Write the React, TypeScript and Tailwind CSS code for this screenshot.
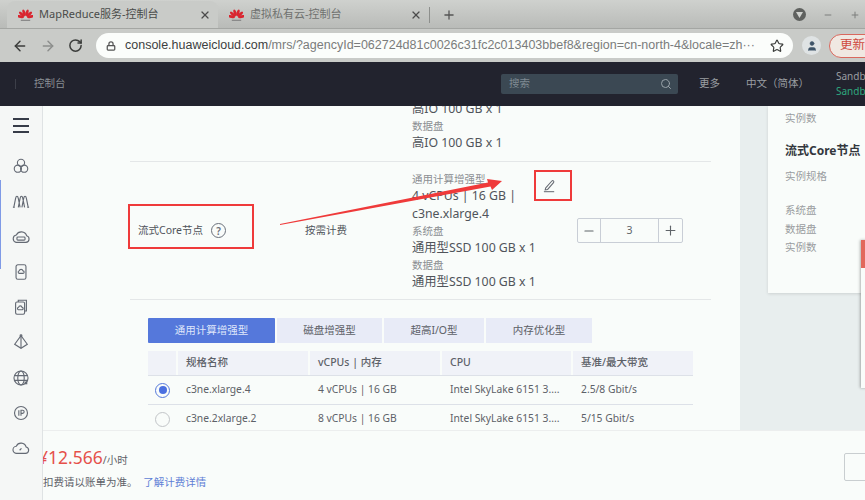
import React from "react";
import { Lock, Star, RotateCw, ArrowLeft, ArrowRight, X, Plus, Minus, Search, User } from "lucide-react";

const FONT = { fontFamily: '"Noto Sans", "Noto Sans CJK SC", sans-serif' };

function HuaweiLogo() {
  const petals = [-78, -48, -17, 17, 48, 78];
  return (
    <svg width="15" height="16" viewBox="0 0 16 16" className="shrink-0">
      {petals.map((a) => (
        <ellipse key={a} cx="8" cy="5.4" rx="1.5" ry="3.7" fill="#d9252f" transform={`rotate(${a} 8 10.8)`} />
      ))}
      <rect x="3" y="13" width="10" height="1.4" fill="#8a8a8a" />
    </svg>
  );
}

function Tab({ title, active }: { title: string; active?: boolean }) {
  return (
    <div
      className={`flex h-full w-[211px] items-center gap-[6px] pl-[11px] pr-[7px] ${
        active ? "rounded-t-[8px] bg-[#c9cbc8] text-[#4a4c4a]" : "text-[#6f716f]"
      }`}
    >
      <HuaweiLogo />
      <span className="flex-1 truncate text-[11px]">{title}</span>
      <X size={12} strokeWidth={2.4} className="text-[#4c4c4c]" />
    </div>
  );
}

const stroke = { fill: "none", stroke: "#646a74", strokeWidth: 1.25 };

function SideIcon({ children }: { children: React.ReactNode }) {
  return (
    <svg width="18" height="18" viewBox="0 0 20 20" className="shrink-0" {...stroke}>
      {children}
    </svg>
  );
}

function Sidebar() {
  return (
    <div className="relative flex w-[43px] shrink-0 flex-col items-center border-r border-[#dfe3e4] bg-[#f5f7f6] pt-[11px]">
      <div className="absolute left-0 top-[74px] h-[89px] w-[1px] bg-[#7f9ae6]" />
      <div className="flex h-[17px] w-[16px] flex-col justify-between py-[1px]">
        <div className="h-[2px] bg-[#363c48]" />
        <div className="h-[2px] bg-[#363c48]" />
        <div className="h-[2px] bg-[#363c48]" />
      </div>
      <div className="mt-[23px] flex flex-col items-center gap-[17.3px]">
        <SideIcon>
          <circle cx="10" cy="6.5" r="4" />
          <circle cx="6.5" cy="13" r="4" />
          <circle cx="13.5" cy="13" r="4" />
        </SideIcon>
        <SideIcon>
          <path d="M2 17l2-10c.6-3 2.4-3 3 0l2 10M7 17l2-10c.6-3 2.4-3 3 0l2 10M11 17l2-10c.6-3 2.4-3 3 0l2 10" />
          <path d="M1 17h2M17 17h2" />
        </SideIcon>
        <SideIcon>
          <path d="M4.5 16h11a3.8 3.8 0 0 0 .8-7.4A6.2 6.2 0 0 0 4.8 7.8a4.2 4.2 0 0 0-.3 8.2z" />
          <rect x="5.5" y="10" width="9" height="3.5" rx="1" />
        </SideIcon>
        <SideIcon>
          <rect x="4.5" y="2" width="11" height="16" rx="2" />
          <path d="M8 11.5h4a1.4 1.4 0 0 0 .2-2.8 2.2 2.2 0 0 0-4.2-.1A1.5 1.5 0 0 0 8 11.5z" />
        </SideIcon>
        <SideIcon>
          <path d="M7 4.5V2.5h9v12h-2" />
          <rect x="4" y="4.5" width="10" height="13.5" rx="1.5" />
          <path d="M7 13h4a1.3 1.3 0 0 0 .2-2.6 2 2 0 0 0-3.9-.1A1.4 1.4 0 0 0 7 13z" />
        </SideIcon>
        <SideIcon>
          <circle cx="10" cy="3" r="1" />
          <path d="M10 3L3 12.5 10 17l7-4.5z" />
          <path d="M10 3v14" />
        </SideIcon>
        <SideIcon>
          <circle cx="10" cy="10" r="7.8" />
          <ellipse cx="10" cy="10" rx="3.6" ry="7.8" />
          <path d="M2.4 7.4h15.2M2.4 12.6h15.2" />
          <rect x="14" y="14" width="3" height="3" fill="#646a74" stroke="none" />
        </SideIcon>
        <SideIcon>
          <circle cx="10" cy="10" r="7.2" />
          <path d="M7.6 7v6M10 13V7h1.8a1.6 1.6 0 0 1 0 3.4H10" />
        </SideIcon>
        <SideIcon>
          <path d="M5.5 16h9.5a3.6 3.6 0 0 0 .7-7.1A5.9 5.9 0 0 0 4.7 8a4 4 0 0 0 .8 8z" />
          <path d="M8.5 12.5l2-2" />
        </SideIcon>
      </div>
    </div>
  );
}

function SpecLine({ children, label }: { children: React.ReactNode; label?: boolean }) {
  return label ? (
    <div className="h-[16px] whitespace-nowrap text-[10.5px] leading-[16px] text-[#8b8e92]">{children}</div>
  ) : (
    <div className="h-[18px] whitespace-nowrap text-[12.3px] leading-[18px] text-[#50545a]">{children}</div>
  );
}

const rows = [
  { on: true, name: "c3ne.xlarge.4", cpu: "4 vCPUs | 16 GB", band: "2.5/8 Gbit/s" },
  { on: false, name: "c3ne.2xlarge.2", cpu: "8 vCPUs | 16 GB", band: "5/15 Gbit/s" },
];
const COLS = "grid grid-cols-[30px_132px_132px_131px_120px]";

function Main() {
  return (
    <div className="relative min-w-0 flex-1 overflow-hidden pl-[87px]">
      <div className="w-[581px]">
        <div className="-mt-[6px] border-b border-[#e4e7e8] pb-[9px] pl-[282px]">
          <SpecLine>高IO 100 GB x 1</SpecLine>
          <SpecLine label>数据盘</SpecLine>
          <SpecLine>高IO 100 GB x 1</SpecLine>
        </div>
        <div className="flex h-[138px] items-center border-b border-[#e4e7e8]">
          <div className="flex w-[175px] items-center pl-[8px] text-[10.5px] text-[#50545a]">
            流式Core节点
            <span className="ml-[8px] flex h-[15px] w-[15px] items-center justify-center rounded-full border-[1.5px] border-[#6a707a] text-[10px] font-semibold leading-none text-[#6a707a]">
              ?
            </span>
          </div>
          <div className="w-[107px] text-[10.5px] text-[#50545a]">按需计费</div>
          <div className="w-[127px] pt-[1px]">
            <SpecLine label>通用计算增强型</SpecLine>
            <SpecLine>4 vCPUs | 16 GB |</SpecLine>
            <SpecLine>c3ne.xlarge.4</SpecLine>
            <SpecLine label>系统盘</SpecLine>
            <SpecLine>通用型SSD 100 GB x 1</SpecLine>
            <SpecLine label>数据盘</SpecLine>
            <SpecLine>通用型SSD 100 GB x 1</SpecLine>
          </div>
          <div className="ml-[38px] flex h-[25px] w-[106px] items-center rounded-[2px] border border-[#c9ced6] text-[#5f6469]">
            <span className="flex h-full w-[23px] items-center justify-center border-r border-[#c9ced6]">
              <Minus size={14} strokeWidth={1.8} />
            </span>
            <span className="flex-1 text-center text-[10.5px]">3</span>
            <span className="flex h-full w-[24px] items-center justify-center border-l border-[#c9ced6]">
              <Plus size={15} strokeWidth={1.8} />
            </span>
          </div>
        </div>
      </div>

      <div className="ml-[18px] mt-[18px] w-[545px]">
        <div className="flex gap-[2px] text-[10.5px] text-[#5d6168]">
          <div className="flex h-[25px] w-[127px] items-center justify-center rounded-[1px] bg-[#5578db] text-[#dfe6fa]">通用计算增强型</div>
          <div className="flex h-[25px] w-[105px] items-center justify-center bg-[#e8ebf7]">磁盘增强型</div>
          <div className="flex h-[25px] w-[100px] items-center justify-center bg-[#e8ebf7]">超高I/O型</div>
          <div className="flex h-[25px] w-[106px] items-center justify-center bg-[#e8ebf7]">内存优化型</div>
        </div>
        <div className={`${COLS} mt-[8px] h-[25px] items-center gap-0 border-b border-[#dde1e8] bg-[#f0f2f8] text-[10.5px] font-medium text-[#5d6168]`}>
          <div className="h-full border-r-2 border-[#f9fcfa]" />
          <div className="flex h-full items-center border-r-2 border-[#f9fcfa] pl-[8px]">规格名称</div>
          <div className="flex h-full items-center border-r-2 border-[#f9fcfa] pl-[8px]">vCPUs | 内存</div>
          <div className="flex h-full items-center border-r-2 border-[#f9fcfa] pl-[8px]">CPU</div>
          <div className="flex h-full items-center pl-[8px]">基准/最大带宽</div>
        </div>
        {rows.map((r) => (
          <div key={r.name} className={`${COLS} h-[29px] items-center border-b border-[#dde1e8] text-[10.3px] text-[#5d6168]`}>
            <div className="flex justify-center pr-[1px]">
              {r.on ? (
                <span className="flex h-[15px] w-[15px] items-center justify-center rounded-full border border-[#5578db]">
                  <span className="h-[8px] w-[8px] rounded-full bg-[#4a6fe0]" />
                </span>
              ) : (
                <span className="h-[15px] w-[15px] rounded-full border border-[#c2c5c8]" />
              )}
            </div>
            <div className="pl-[8px]">{r.name}</div>
            <div className="pl-[8px]">{r.cpu}</div>
            <div className="pl-[8px]">Intel SkyLake 6151 3....</div>
            <div className="pl-[8px]">{r.band}</div>
          </div>
        ))}
      </div>
    </div>
  );
}

function SummaryPanel() {
  return (
    <div className="relative w-[125px] shrink-0 overflow-hidden bg-[#e8eeee] pl-[28px]">
      <div className="h-[187px] w-[110px] bg-[#f9fcfa] pl-[17px] shadow-[0_1px_3px_rgba(0,0,0,0.12)]">
        <div className="text-[10.5px] leading-[25px] text-[#9a9da0]">实例数</div>
        <div className="mt-[8px] whitespace-nowrap text-[12px] font-bold leading-[24px] text-[#33373d]">流式Core节点</div>
        <div className="mt-[1px] text-[10.5px] leading-[24px] text-[#9a9da0]">实例规格</div>
        <div className="mt-[13px] text-[10.5px] leading-[18.5px] text-[#9a9da0]">系统盘</div>
        <div className="text-[10.5px] leading-[18.5px] text-[#9a9da0]">数据盘</div>
        <div className="text-[10.5px] leading-[18.5px] text-[#9a9da0]">实例数</div>
      </div>
      <div className="absolute left-[121px] top-[134px] h-[148px] w-[10px] bg-[#f9fcfa] shadow-[-1px_0_3px_rgba(0,0,0,0.3)]">
        <div className="h-[28px] bg-[#e2685c]" />
      </div>
    </div>
  );
}

export default function App() {
  return (
    <div className="relative flex h-[500px] w-[865px] flex-col overflow-hidden bg-[#f9fcfa]" style={FONT}>
      {/* tab strip */}
      <div className="flex h-[28px] shrink-0 items-center bg-gradient-to-b from-[#cfd1ce] to-[#b9bbb8] pl-[7px] pt-[1px]">
        <Tab title="MapReduce服务-控制台" active />
        <Tab title="虚拟私有云-控制台" />
        <div className="h-[16px] w-px bg-[#8d8f8c]" />
        <Plus size={14} strokeWidth={2.2} className="ml-[12px] text-[#555]" />
        <div className="ml-auto mr-[5px] flex items-center gap-[17px] text-[#7c7e7c]">
          <span className="flex h-[13px] w-[13px] items-center justify-center rounded-full bg-[#5f615f]">
            <svg width="7" height="6" viewBox="0 0 7 6"><path d="M0 0h7L3.5 6z" fill="#d0d2cf" /></svg>
          </span>
          <Minus size={10} strokeWidth={2.4} />
          <Plus size={10} strokeWidth={2.4} />
        </div>
      </div>
      {/* toolbar */}
      <div className="flex h-[34px] shrink-0 items-center border-t border-[#a4a6a3] bg-[#c9cbc8] pl-[12px]">
        <ArrowLeft size={16} strokeWidth={2.2} className="shrink-0 text-[#3b3d3b]" />
        <ArrowRight size={16} strokeWidth={2.2} className="ml-[12px] shrink-0 text-[#8c8e8c]" />
        <RotateCw size={15} strokeWidth={2.4} className="ml-[12px] shrink-0 text-[#3b3d3b]" />
        <div className="ml-[13px] flex h-[25px] w-[697px] shrink-0 items-center rounded-full bg-[#fbfdfb] pl-[10px] pr-[9px]">
          <Lock size={10} strokeWidth={3} className="shrink-0 text-[#555]" />
          <div className="ml-[9px] min-w-0 flex-1 overflow-hidden whitespace-nowrap text-[12.5px] text-[#7a7c7c]" style={{ fontFamily: '"Liberation Sans", sans-serif' }}>
            <span className="text-[#3d3f3f]">console.huaweicloud.com</span>/mrs/?agencyId=062724d81c0026c31fc2c013403bbef8&amp;region=cn-north-4&amp;locale=zh···
          </div>
          <Star size={14} strokeWidth={2} className="ml-[12px] shrink-0 text-[#3b3d3b]" />
        </div>
        <span className="ml-[9px] flex h-[19px] w-[19px] shrink-0 items-center justify-center rounded-full bg-[#dfe3e4]">
          <User size={12} fill="#3f5468" strokeWidth={1} className="text-[#3f5468]" />
        </span>
        <span className="ml-[8px] flex h-[24px] w-[50px] shrink-0 items-center rounded-full border border-[#d9685e] bg-[#f0e8e2] pl-[10px] text-[12.5px] text-[#cf4a3e]">
          <span className="whitespace-nowrap">更新</span>
        </span>
      </div>
      {/* console header */}
      <div className="flex h-[44px] shrink-0 items-center whitespace-nowrap bg-[#22232e] text-[10.5px] text-[#8a8f94]">
        <div className="flex w-[501px] shrink-0 items-center">
          <div className="ml-[15px] h-[10px] w-px bg-[#3d3f49]" />
          <span className="ml-[18px]">控制台</span>
        </div>
        <div className="flex h-[20px] w-[177px] shrink-0 items-center justify-between rounded-[2px] bg-[#3b4853] pl-[8px] pr-[6px] text-[#7f8a92]">
          搜索
          <Search size={12} className="text-[#9aa3aa]" />
        </div>
        <span className="ml-[21px] text-[#9a9ea2]">更多</span>
        <span className="ml-[26px] text-[#9a9ea2]">中文（简体）</span>
        <div className="ml-[27px] text-[10px] leading-[15px]">
          <div className="text-[#9a9ea2]">Sandb</div>
          <div className="text-[#2ea87e]">Sandb</div>
        </div>
      </div>
      {/* body */}
      <div className="flex min-h-0 flex-1">
        <Sidebar />
        <div className="flex min-w-0 flex-1 flex-col">
          <div className="flex h-[325px] shrink-0 border-b border-[#eceeee]">
            <Main />
            <SummaryPanel />
          </div>
          <div className="relative flex-1 overflow-hidden">
            <div className="-ml-[5px] mt-[13px] flex items-baseline whitespace-nowrap">
              <span className="text-[17.5px] leading-[26px] text-[#e5514a]">¥12.566</span>
              <span className="text-[10.5px] text-[#5d6168]">/小时</span>
            </div>
            <div className="mt-[3px] whitespace-nowrap text-[10.5px] leading-[18px] text-[#5d6168]">
              扣费请以账单为准。 <span className="ml-[3px] text-[#5f7fd6]">了解计费详情</span>
            </div>
            <div className="absolute left-[801px] top-[22px] h-[28px] w-[40px] rounded-[2px] border border-[#c9ced0]" />
          </div>
        </div>
      </div>

      {/* annotations */}
      <div className="absolute left-[128px] top-[204px] h-[45px] w-[126px] border-2 border-[#ef3a3a]" />
      <div className="absolute left-[534px] top-[170px] flex h-[31px] w-[38px] items-center justify-center border-2 border-[#ef3a3a] pr-[8px]">
        <svg width="15" height="15" viewBox="0 0 16 16" fill="none" stroke="#666a72" strokeWidth="1.1">
          <path d="M4 10.5L10.5 3.2c.6-.6 1.2-.6 1.8 0s.5 1.1 0 1.7L6 12.2l-2.6.4z" />
          <path d="M2 14.6h11" />
        </svg>
      </div>
      <svg className="absolute left-[275px] top-[172px]" width="235" height="56" viewBox="0 0 235 56">
        <path d="M5 52L213 10.5 212 7 227 9 217 18 215.5 14.5 5 53z" fill="#ef3a3a" />
      </svg>
    </div>
  );
}
